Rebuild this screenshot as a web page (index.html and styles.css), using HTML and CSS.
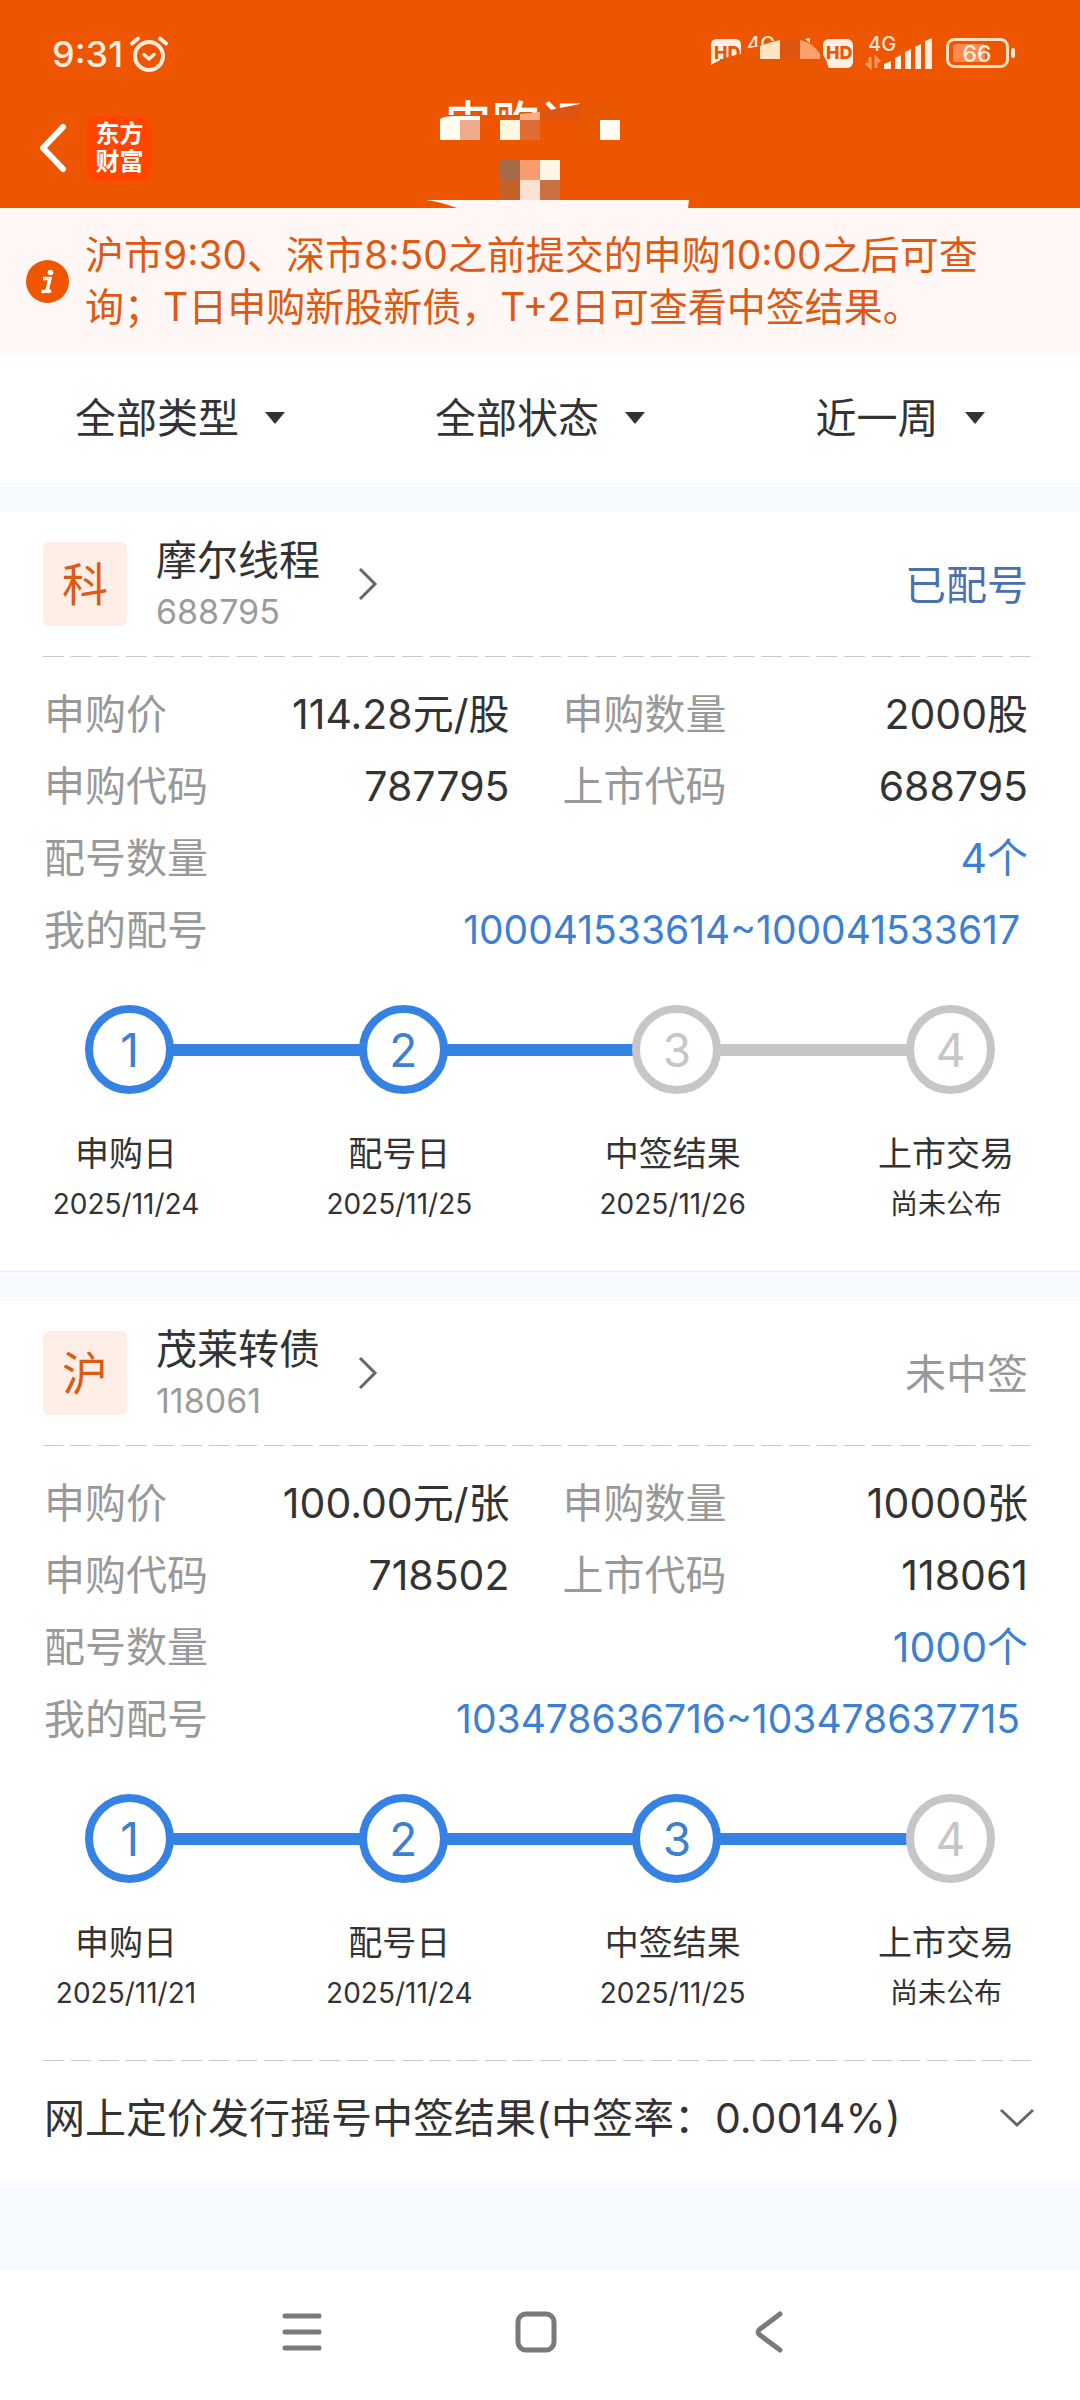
FILE: index.html
```html
<!DOCTYPE html>
<html lang="zh-CN">
<head>
<meta charset="utf-8">
<meta name="viewport" content="width=device-width, initial-scale=1">
<title>申购记录</title>
<link rel="stylesheet" href="styles.css">
</head>
<body>
<header class="header">
  <div class="status-bar">
    <div class="clock">
      <span>9:31</span>
      <svg width="40" height="38" viewBox="0 0 40 38" fill="none" stroke="#ffeedd" stroke-linecap="round" aria-hidden="true">
        <circle cx="20" cy="21" r="14" stroke-width="4"/>
        <path d="M15 19.500l5 4.500l5-4.500" stroke-width="3.500" stroke-linejoin="round"/>
        <path d="M3 8.500l6-5M31 3.500l6 5" stroke-width="4"/>
      </svg>
    </div>
    <svg class="indicators" width="310" height="50" viewBox="706 30 310 50" aria-hidden="true">
      <path d="M717 40h18q6 0 6 6v9q-17 3-30 11V46q0-6 6-6z" fill="#ffefe6"/>
      <text x="714" y="60" class="hd">HD</text>
      <path d="M710 67q14-9 33-12v12z" fill="#ed5500"/>
      <text x="747" y="52" class="net">4G</text>
      <path d="M744 50l16-3 20-7v22h-36z" fill="#ed5500"/>
      <path d="M760 47q10-4 20-6v19h-20z" fill="#ffe6c2"/>
      <path d="M780 41h20v19h-20z" fill="#de5410"/>
      <path d="M800 41q15 3 23 19h-23z" fill="#ffa06c"/>
      <path d="M805 40l5-1v5z" fill="#ffeedd"/>
      <path d="M720 60h110v20h-110z" fill="#e85600"/>
      <rect x="823" y="40" width="30" height="29" rx="6" fill="#ffefe6"/>
      <path d="M820 52q6 6 9 18h-9z" fill="#ed5500"/>
      <text x="826" y="60" class="hd">HD</text>
      <text x="868" y="52" class="net">4G</text>
      <path d="M870 58v10l-4-4M876 69V59l4 4" fill="none" stroke="#ff9c63" stroke-width="3"/>
      <g fill="#ffefe0">
        <path d="M884 65l7-3v8h-7zM895 59l6-3v14h-6zM905 53l6-3v20h-6zM915 48l6-3v25h-6zM925 42l7-3v31h-7z"/>
      </g>
      <rect x="947.500" y="40.500" width="60" height="27" rx="7" fill="none" stroke="#ffe0c0" stroke-width="3"/>
      <rect x="953" y="45" width="32" height="18" rx="3" fill="#ff8a4f"/>
      <rect x="1011" y="49" width="4" height="10" rx="2" fill="#ffe8d0"/>
      <text x="977" y="63" text-anchor="middle" class="charge">66</text>
    </svg>
  </div>
  <div class="title-bar">
    <button class="back" type="button" aria-label="返回">
      <svg width="30" height="52" viewBox="0 0 30 52" fill="none" stroke="#fff" stroke-width="6" stroke-linecap="round" stroke-linejoin="round"><path d="M25 5L5 26l20 21"/></svg>
    </button>
    <div class="logo"><span>东方</span><span>财富</span></div>
    <h1 class="title">申购记录</h1>
    <svg class="mosaic" width="320" height="108" viewBox="380 100 320 108" aria-hidden="true">
      <path d="M440 115h92l8-3 15-2 25-5v-5h68v55H440z" fill="#ed5500"/>
      <path d="M540 112l40-8v16h-40z" fill="#de5510"/>
      <path d="M580 104l40-4v40h-40z" fill="#e75700"/>
      <path d="M440 120q0-4 20-4h20v4z" fill="#fff"/>
      <path d="M500 115h20v5h-20z" fill="#de5510"/>
      <path d="M520 114l20-2v8h-20z" fill="#ffae82"/>
      <g shape-rendering="crispEdges">
        <path d="M440 120h20v20h-20zM600 120h20v20h-20z" fill="#fffcf0"/>
        <path d="M460 120h20v20h-20z" fill="#f0aa8e"/>
        <path d="M500 120h20v20h-20z" fill="#fff7df"/>
        <path d="M520 120h20v20h-20z" fill="#df6c32"/>
        <path d="M500 160h20v20h-20z" fill="#a56a4a"/>
        <path d="M520 160h20v20h-20z" fill="#f89b6e"/>
        <path d="M540 160h20v20h-20z" fill="#fff6e6"/>
        <path d="M500 180h20v20h-20z" fill="#c5622a"/>
        <path d="M520 180h20v20h-20z" fill="#ffe0d2"/>
        <path d="M540 180h20v20h-20z" fill="#c8703f"/>
      </g>
      <path d="M426 200h263l-1 8H457q-16-6-31-8z" fill="#fff6f6"/>
    </svg>
  </div>
</header>

<section class="notice">
  <svg class="notice-icon" width="43" height="43" viewBox="0 0 43 43" aria-hidden="true">
    <circle cx="21.500" cy="21.500" r="21.500" fill="#ed5500"/>
    <path d="M17 18.500h7l-3 12q0 2 4 0M15.500 31.500h4" fill="none" stroke="#fff" stroke-width="3.500"/>
    <circle cx="24.500" cy="12.500" r="2.800" fill="#fff"/>
  </svg>
  <p>沪市9:30、深市8:50之前提交的申购10:00之后可查<br>询；T日申购新股新债，T+2日可查看中签结果。</p>
</section>

<form class="filters">
  <label class="filter">
    <select aria-label="类型"><option>全部类型</option></select>
    <svg width="20" height="12" viewBox="0 0 20 12" aria-hidden="true"><path d="M0 0h20L10 12z" fill="#333"/></svg>
  </label>
  <label class="filter">
    <select aria-label="状态"><option>全部状态</option></select>
    <svg width="20" height="12" viewBox="0 0 20 12" aria-hidden="true"><path d="M0 0h20L10 12z" fill="#333"/></svg>
  </label>
  <label class="filter">
    <select aria-label="时间"><option>近一周</option></select>
    <svg width="20" height="12" viewBox="0 0 20 12" aria-hidden="true"><path d="M0 0h20L10 12z" fill="#333"/></svg>
  </label>
</form>

<main class="list">
  <article class="card">
    <div class="card-head">
      <span class="badge">科</span>
      <a class="stock" href="#688795">
        <span class="stock-text"><span class="name">摩尔线程</span><span class="code">688795</span></span>
        <svg width="20" height="34" viewBox="0 0 20 34" fill="none" stroke="#666" stroke-width="3" aria-hidden="true"><path d="M2 2l15 15L2 32"/></svg>
      </a>
      <span class="state state-done">已配号</span>
    </div>
    <div class="dash"></div>
    <dl class="info">
      <div class="cell"><dt>申购价</dt><dd>114.28元/股</dd></div>
      <div class="cell"><dt>申购数量</dt><dd>2000股</dd></div>
      <div class="cell"><dt>申购代码</dt><dd>787795</dd></div>
      <div class="cell"><dt>上市代码</dt><dd>688795</dd></div>
      <div class="cell wide"><dt>配号数量</dt><dd class="blue">4个</dd></div>
      <div class="cell wide"><dt>我的配号</dt><dd class="blue range">100041533614~100041533617</dd></div>
    </dl>
    <div class="track">
      <span class="dot on">1</span><i class="bar on"></i><span class="dot on">2</span><i class="bar on"></i><span class="dot">3</span><i class="bar"></i><span class="dot">4</span>
    </div>
    <ol class="steps">
      <li><b>申购日</b><span>2025/11/24</span></li>
      <li><b>配号日</b><span>2025/11/25</span></li>
      <li><b>中签结果</b><span>2025/11/26</span></li>
      <li><b>上市交易</b><span>尚未公布</span></li>
    </ol>
  </article>

  <article class="card">
    <div class="card-head">
      <span class="badge">沪</span>
      <a class="stock" href="#118061">
        <span class="stock-text"><span class="name">茂莱转债</span><span class="code">118061</span></span>
        <svg width="20" height="34" viewBox="0 0 20 34" fill="none" stroke="#666" stroke-width="3" aria-hidden="true"><path d="M2 2l15 15L2 32"/></svg>
      </a>
      <span class="state">未中签</span>
    </div>
    <div class="dash"></div>
    <dl class="info">
      <div class="cell"><dt>申购价</dt><dd>100.00元/张</dd></div>
      <div class="cell"><dt>申购数量</dt><dd>10000张</dd></div>
      <div class="cell"><dt>申购代码</dt><dd>718502</dd></div>
      <div class="cell"><dt>上市代码</dt><dd>118061</dd></div>
      <div class="cell wide"><dt>配号数量</dt><dd class="blue">1000个</dd></div>
      <div class="cell wide"><dt>我的配号</dt><dd class="blue range">103478636716~103478637715</dd></div>
    </dl>
    <div class="track">
      <span class="dot on">1</span><i class="bar on"></i><span class="dot on">2</span><i class="bar on"></i><span class="dot on">3</span><i class="bar on"></i><span class="dot">4</span>
    </div>
    <ol class="steps">
      <li><b>申购日</b><span>2025/11/21</span></li>
      <li><b>配号日</b><span>2025/11/24</span></li>
      <li><b>中签结果</b><span>2025/11/25</span></li>
      <li><b>上市交易</b><span>尚未公布</span></li>
    </ol>
    <div class="dash"></div>
    <button class="result" type="button">
      <span>网上定价发行摇号中签结果(中签率：0.0014%)</span>
      <svg width="36" height="20" viewBox="0 0 36 20" fill="none" stroke="#666" stroke-width="3" aria-hidden="true"><path d="M2 2l16 15L34 2"/></svg>
    </button>
  </article>
</main>

<nav class="nav">
  <button type="button" aria-label="最近任务">
    <svg width="42" height="42" viewBox="0 0 42 42" fill="none" stroke="#7a797b" stroke-width="5" stroke-linecap="round"><path d="M4 5h34M4 21h34M4 37h34"/></svg>
  </button>
  <button type="button" aria-label="主页">
    <svg width="42" height="42" viewBox="0 0 42 42" fill="none" stroke="#7a797b" stroke-width="5"><rect x="3" y="3" width="36" height="36" rx="8"/></svg>
  </button>
  <button type="button" aria-label="返回">
    <svg width="42" height="42" viewBox="0 0 42 42" fill="none" stroke="#7a797b" stroke-width="5" stroke-linecap="round" stroke-linejoin="round"><path d="M31 3L11 18q-4 3 0 6l20 15"/></svg>
  </button>
</nav>
</body>
</html>
```
FILE: styles.css
```css
* { box-sizing: border-box; }

body {
  margin: 0;
  min-height: 100vh;
  display: flex;
  flex-direction: column;
  background: #f7faff;
  color: #333;
  font-family: Inter, "Noto Sans CJK SC", sans-serif;
  font-size: 41px;
}

button {
  padding: 0;
  border: 0;
  background: none;
  color: inherit;
  font: inherit;
}

svg { display: block; flex: none; }

/* header */
.header { background: #ed5500; color: #fff; }

.status-bar {
  display: flex;
  justify-content: space-between;
  align-items: center;
  height: 88px;
  padding: 20px 64px 0 52px;
}

.clock {
  display: flex;
  align-items: center;
  gap: 6px;
  color: #ffeedd;
  font-size: 36px;
  font-weight: 500;
  line-height: 48px;
}

.hd { font: 800 18px Inter, sans-serif; fill: #ed5500; }
.net { font: 500 20px Inter, sans-serif; fill: #ffe3cc; }
.charge { font: 500 23px Inter, sans-serif; fill: #fff0e0; }

.title-bar {
  position: relative;
  display: flex;
  align-items: center;
  height: 120px;
  padding-left: 38px;
}

.back { width: 30px; }

.logo {
  display: grid;
  place-content: center;
  width: 65px;
  height: 65px;
  margin-left: 19px;
  border-radius: 12px;
  background: #ff4500;
  font-size: 24px;
  font-weight: 700;
  line-height: 28px;
}

.title {
  position: absolute;
  inset: 0 0 auto;
  margin: 0;
  text-align: center;
  font-size: 48px;
  font-weight: 500;
  line-height: 72px;
}

.mosaic {
  position: absolute;
  bottom: 0;
  left: 50%;
  margin-left: -160px;
}

/* notice */
.notice {
  display: flex;
  align-items: center;
  gap: 16px;
  padding: 21px 26px 20px;
  background: #fff6f6;
  color: #dc5a14;
  font-size: 39px;
  line-height: 52px;
}

.notice p { margin: 0; white-space: nowrap; }

/* filters */
.filters {
  display: grid;
  grid-template-columns: repeat(3, 1fr);
  height: 130px;
  background: #fff;
}

.filter {
  display: flex;
  justify-content: center;
  align-items: center;
  gap: 26px;
}

.filter select {
  appearance: none;
  padding: 0;
  border: 0;
  background: none;
  color: inherit;
  font: inherit;
  line-height: 60px;
}

/* cards */
.list {
  flex: 1;
  display: flex;
  flex-direction: column;
  gap: 29px;
  padding: 29px 0;
}

.card { background: #fff; border-bottom: 1px solid #eee; }
.card:last-child { border-bottom: 0; }

.card-head {
  display: flex;
  align-items: center;
  padding: 30px 52px 30px 43px;
}

.badge {
  width: 84px;
  border-radius: 6px;
  background: #ffeee6;
  color: #dc5a14;
  font-size: 46px;
  line-height: 84px;
  text-align: center;
}

.stock {
  display: flex;
  align-items: center;
  gap: 38px;
  margin-left: 29px;
  color: inherit;
  text-decoration: none;
}

.stock-text { display: flex; flex-direction: column; line-height: 52px; margin: -8px 0 -12px; }
.code { color: #9b9b9b; font-size: 34px; }
.state { margin-left: auto; padding-bottom: 4px; color: #999; }
.state-done { color: #4a71ad; }

.dash {
  height: 1px;
  margin: 0 42px 0 43px;
  background: linear-gradient(90deg, #c8c8c8 75%, transparent 75%) 0 0 / 28px 1px round;
}

.info {
  display: grid;
  grid-template-columns: 1fr 1fr;
  column-gap: 53px;
  margin: 0;
  padding: 21px 52px 0 44px;
  line-height: 72px;
}

.cell { display: flex; justify-content: space-between; white-space: nowrap; }
.cell dt { color: #999; }
.cell dd { margin: 0; }
.wide { grid-column: 1 / -1; }
.cell .blue { color: #3d7fd0; }
.cell .range { padding-right: 8px; font-size: 39px; }

.track {
  display: flex;
  align-items: center;
  margin-top: 39px;
  padding: 0 85px;
}

.dot {
  width: 89px;
  height: 89px;
  border: 8px solid #c6c6c6;
  border-radius: 50%;
  color: #c6c6c6;
  font-size: 46px;
  line-height: 75px;
  text-align: center;
}

.dot.on { border-color: #3582e3; color: #3d7fd0; }

.bar { flex: 1; height: 12px; margin: 0 -2px; background: #c6c6c6; }
.bar.on { background: #3582e3; }

.steps {
  display: flex;
  justify-content: space-between;
  margin: 0;
  padding: 35px 44px 42px 36px;
  list-style: none;
  line-height: 50px;
}

.steps li { width: 180px; display: flex; flex-direction: column; align-items: center; }
.steps b { font-size: 34px; font-weight: 400; }
.steps span { font-size: 28px; }

.result {
  display: flex;
  justify-content: space-between;
  align-items: center;
  width: 100%;
  padding: 27px 45px 33px 44px;
  line-height: 60px;
}

/* system navigation */
.nav {
  display: flex;
  justify-content: center;
  gap: 192px;
  padding: 41px 8px 47px 0;
  background: #fff;
}
```
